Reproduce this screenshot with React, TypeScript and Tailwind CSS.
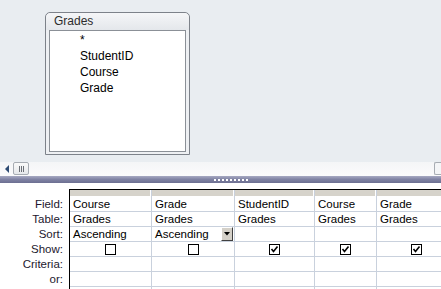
const cols = [
  { w: "w-[82px]", field: "Course", table: "Grades", sort: "Ascending", show: false, drop: false },
  { w: "w-[83px]", field: "Grade", table: "Grades", sort: "Ascending", show: false, drop: true },
  { w: "w-[80px]", field: "StudentID", table: "Grades", sort: "", show: true, drop: false },
  { w: "w-[62px]", field: "Course", table: "Grades", sort: "", show: true, drop: false },
  { w: "w-[80px]", field: "Grade", table: "Grades", sort: "", show: true, drop: false },
];

const labels = ["Field:", "Table:", "Sort:", "Show:", "Criteria:", "or:"];

function CheckBox({ checked }: { checked: boolean }) {
  return (
    <div className="w-[11px] h-[11px] border border-black bg-white flex items-center justify-center">
      {checked && (
        <svg width="9" height="9" viewBox="0 0 9 9">
          <path d="M1.5 4 L3.5 6.5 L7.5 1.5" stroke="#000" strokeWidth="1.6" fill="none" />
        </svg>
      )}
    </div>
  );
}

function FieldList() {
  return (
    <div className="ml-[45px] mt-[12px] w-[145px] h-[143px] border border-[#7d828a] rounded-t-[5px] bg-[#eef0f3] flex flex-col">
      <div className="h-[17px] pl-[8px] text-[12px] leading-[17px] text-[#2c2c2c] bg-gradient-to-b from-[#f5f6f8] to-[#e4e7eb] rounded-t-[5px]">
        Grades
      </div>
      <div className="mx-[3px] mb-[2px] flex-1 border border-[#8b9097] bg-white pl-[30px] pt-[1px] text-[12px] leading-[16px] text-black">
        <div>*</div>
        <div>StudentID</div>
        <div>Course</div>
        <div>Grade</div>
      </div>
    </div>
  );
}

function ScrollBar() {
  return (
    <div className="h-[14px] flex bg-gradient-to-b from-[#f4f5f7] to-[#fbfbfc]">
      <div className="w-[13px] flex items-center justify-center">
        <svg width="6" height="8" viewBox="0 0 6 8">
          <path d="M5 0 L5 8 L1 4 Z" fill="#2d4a73" />
        </svg>
      </div>
      <div className="w-[16px] h-[13px] border border-[#a7acb3] rounded-[2px] bg-gradient-to-b from-[#fafafa] to-[#e6e8eb] flex items-center justify-center gap-[1px]">
        <div className="w-[1px] h-[6px] bg-[#6c7077]" />
        <div className="w-[1px] h-[6px] bg-[#6c7077]" />
        <div className="w-[1px] h-[6px] bg-[#6c7077]" />
      </div>
      <div className="flex-1" />
      <div className="w-[7px] h-[13px] border border-r-0 border-[#a7acb3] rounded-l-[2px] bg-[#f4f5f7]" />
    </div>
  );
}

function Splitter() {
  return (
    <div className="h-[7px] bg-gradient-to-b from-[#a7a9c2] via-[#7f82a3] to-[#6c6f91] flex items-center justify-center">
      <div className="flex gap-[2px] ml-[20px]">
        {Array.from({ length: 9 }).map((_, i) => (
          <div key={i} className="w-[2px] h-[2px] bg-white" />
        ))}
      </div>
    </div>
  );
}

function Grid() {
  return (
    <div className="flex-1 bg-white pt-[6px] flex overflow-hidden text-[11.5px] leading-[14px]">
      <div className="w-[69px] shrink-0 pt-[8px] text-right pr-[6px] text-[#23182e]">
        {labels.map((l) => (
          <div key={l} className="h-[15px]">
            {l}
          </div>
        ))}
      </div>
      <div className="border-t border-l border-black flex">
        {cols.map((c, i) => (
          <div key={i} className={`${c.w} shrink-0 border-r border-[#c9d1dd] flex flex-col`}>
            <div className="h-[6px] bg-[#d6d3cb] mr-[1px]" />
            <div className="h-[1px]" />
            <div className="h-[15px] border-b border-[#c9d1dd] pl-[3px] text-black">{c.field}</div>
            <div className="h-[15px] border-b border-[#c9d1dd] pl-[3px] text-black">{c.table}</div>
            <div className="h-[15px] border-b border-[#c9d1dd] pl-[3px] text-black flex items-center justify-between pr-[1px]">
              <span>{c.sort}</span>
              {c.drop && (
                <div className="w-[12px] h-[14px] bg-[#d4d0c8] border border-t-white border-l-white border-r-[#404040] border-b-[#404040] flex items-center justify-center">
                  <svg width="6" height="4" viewBox="0 0 6 4">
                    <path d="M0 0 L6 0 L3 3.5 Z" fill="#000" />
                  </svg>
                </div>
              )}
            </div>
            <div className="h-[15px] border-b border-[#c9d1dd] flex items-center justify-center">
              <CheckBox checked={c.show} />
            </div>
            <div className="h-[15px] border-b border-[#c9d1dd]" />
            <div className="h-[15px] border-b border-[#c9d1dd]" />
          </div>
        ))}
      </div>
    </div>
  );
}

export default function App() {
  return (
    <div
      className="w-[441px] h-[289px] overflow-hidden flex flex-col bg-white"
      style={{ fontFamily: '"Liberation Sans", Arial, sans-serif' }}
    >
      <div className="h-[162px] shrink-0 bg-[#e9edf1]">
        <FieldList />
      </div>
      <ScrollBar />
      <Splitter />
      <Grid />
    </div>
  );
}
